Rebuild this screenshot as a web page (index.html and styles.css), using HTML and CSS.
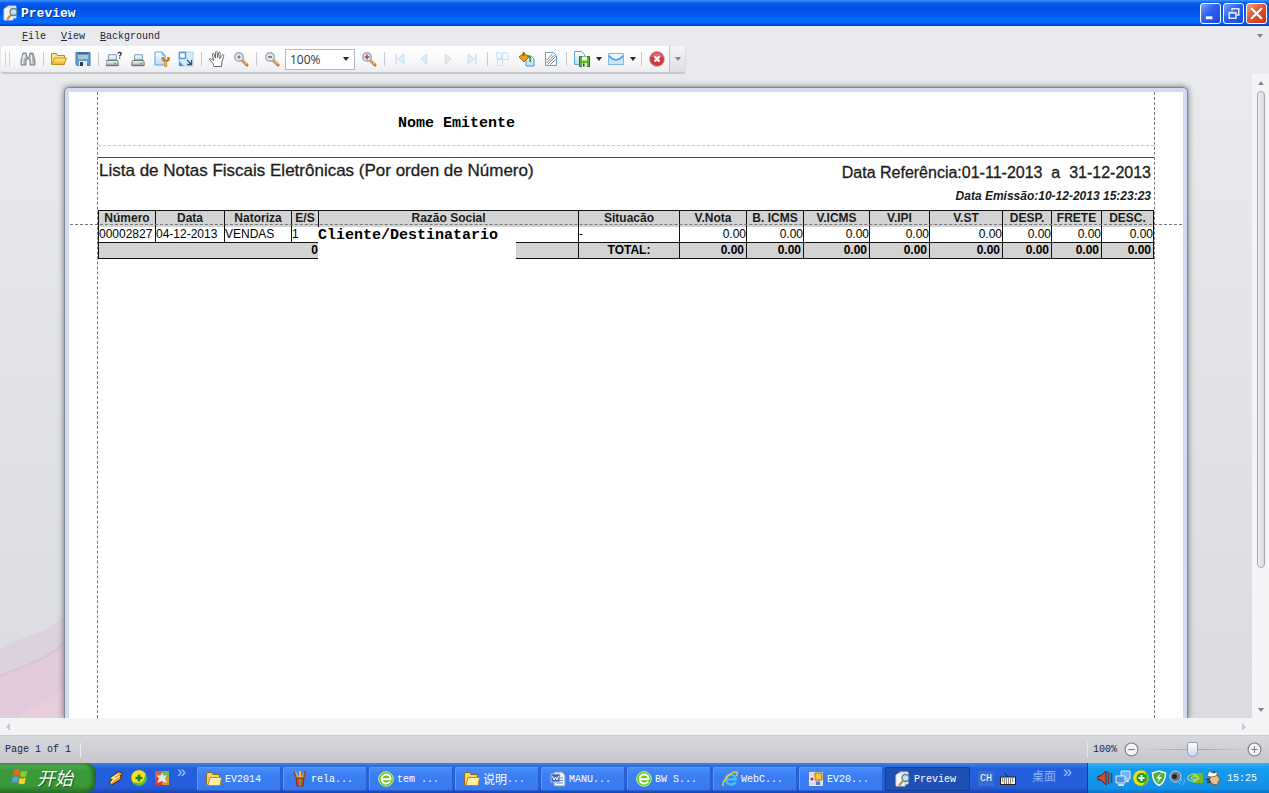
FILE: index.html
```html
<!DOCTYPE html>
<html lang="pt">
<head>
<meta charset="utf-8">
<title>Preview</title>
<link rel="stylesheet" href="styles.css">
</head>
<body>
<svg class="defs" aria-hidden="true">
  <defs>
    <linearGradient id="gold" x1="0" y1="0" x2="0" y2="1"><stop offset="0" stop-color="#fff0a0"/><stop offset="1" stop-color="#eeb01c"/></linearGradient>
    <linearGradient id="steel" x1="0" y1="0" x2="0" y2="1"><stop offset="0" stop-color="#fff"/><stop offset="1" stop-color="#a4a9ae"/></linearGradient>
    <linearGradient id="sky" x1="0" y1="0" x2="0" y2="1"><stop offset="0" stop-color="#fff"/><stop offset="1" stop-color="#b4dcf8"/></linearGradient>
    <symbol id="preview" viewBox="0 0 16 16"><path d="M5 1h8v12H5z" fill="#fff" stroke="#bcd" /><path d="M1 4l3-2h6v13H1z" fill="#f6f6f4" stroke="#ccd"/><circle cx="10.500" cy="7" r="3.500" fill="#c4e4f6" stroke="#5f7f98" stroke-width="1.400"/><path d="m8 10-4 4.500" stroke="#c28a42" stroke-width="2"/></symbol>
    <symbol id="folder" viewBox="0 0 16 16"><path d="M.5 13.500v-11h5l1 2h7v9z" fill="#ffe484" stroke="#b98a19"/><path d="M1 13.500 3.500 7h12l-2.500 6.500z" fill="url(#gold)" stroke="#c28f18"/></symbol>
    <symbol id="fold2" viewBox="0 0 16 16"><path d="M.5 13V3l1-1.500h4L7 3.500h6.500V7H15l-1 7.500H2z" fill="#f8d468" stroke="#8d6a17"/><path d="M2 14 4 6.500h11.500L14 14.500H2z" fill="#fff0a0" stroke="#b98a29"/></symbol>
    <symbol id="printer" viewBox="0 0 16 16"><path d="M4 8V2h9v6z" fill="url(#sky)" stroke="#6a8ca8"/><path d="M2 8.500h12l1 2v4H1v-4z" fill="url(#steel)" stroke="#555b62"/><path d="M2 14h12" stroke="#6c7279"/><path d="M10 11h3v1.500h-3z" fill="#64c52d"/></symbol>
    <symbol id="lens" viewBox="0 0 16 16"><path d="m9 9 5 5" stroke="#bd7126" stroke-width="3" stroke-linecap="round"/><path d="m9.500 9 4.500 4.500" stroke="#f4bd72" stroke-width="1.400"/><circle cx="6" cy="6" r="4.300" fill="#d8edfa" stroke="#9aa9b8" stroke-width="1.400"/></symbol>
    <symbol id="browser" viewBox="0 0 16 16"><circle cx="8" cy="8" r="7.300" fill="#68c81e" stroke="#c4ee94"/><path d="M3.500 8.300h9c.3-3-1.700-4.800-4.300-4.800-2.700 0-4.500 2-4.500 4.500s2 4.500 4.500 4.500c1.700 0 3-.6 4-2" fill="none" stroke="#fff" stroke-width="2"/></symbol>
  </defs>
</svg>

<div class="window">
  <header class="titlebar">
    <svg class="i16"><use href="#preview"/></svg>
    <h1 class="caption">Preview</h1>
    <button class="winbtn" aria-label="Minimize"><svg viewBox="0 0 20 20"><path d="M5 13h7v3H5z" fill="#fff"/></svg></button>
    <button class="winbtn" aria-label="Restore"><svg viewBox="0 0 20 20" fill="none" stroke="#dfe9ff"><path d="M8.500 7V5h7v6.500H13M8 5h8" stroke-width="1.700"/><path d="M5.500 9.500h7v5.500h-7zM5 9h8" stroke-width="1.700"/></svg></button>
    <button class="winbtn close" aria-label="Close"><svg viewBox="0 0 20 20"><path d="m5 5 10 10m0-10-10 10" stroke="#fff" stroke-width="2.400" stroke-linecap="round"/></svg></button>
  </header>

  <nav class="menubar">
    <button class="menu"><u>F</u>ile</button>
    <button class="menu"><u>V</u>iew</button>
    <button class="menu"><u>B</u>ackground</button>
    <svg class="caret grey menu-more" viewBox="0 0 8 4"><path d="M1 0h6L4 4z"/></svg>
  </nav>

  <div class="toolbar">
    <span class="grip"></span>
    <button class="tool" aria-label="Find"><svg viewBox="0 0 16 16"><path d="M3 2h3l1 4 1 1 1-1 1-4h3l2 8v4h-5v-4l-1-2H7l-1 2v4H1v-4z" fill="#a9b1b8" stroke="#80878e"/><path d="M3.500 4 2.500 13M11 4l1 9M4.500 3v4" stroke="#eef2f4" stroke-width="1.300"/></svg></button>
    <span class="sep"></span>
    <button class="tool" aria-label="Open"><svg><use href="#folder"/></svg></button>
    <button class="tool" aria-label="Save"><svg viewBox="0 0 16 16"><path d="M1 1.500h14v13H2l-1-1z" fill="#5b9fd8" stroke="#3f76ab"/><path d="M3 2h10v6H3z" fill="#b4c2ca"/><path d="M3 2h10v1.500H3z" fill="#37658e"/><path d="M4 10h8v5H4z" fill="#e8edf2"/><path d="M5 11h3v4H5z" fill="#333e4a"/></svg></button>
    <span class="sep"></span>
    <button class="tool" aria-label="Print"><svg viewBox="0 0 16 16"><use href="#printer" x="-1" y="2" width="14" height="14"/><path d="M12 2.500c0-1.500 3.300-1.500 3.300 0 0 1.200-1.600 1.200-1.600 2.700M13.700 6.200v1.200" fill="none" stroke="#222" stroke-width="1.200"/></svg></button>
    <button class="tool" aria-label="Quick print"><svg viewBox="0 0 16 16"><use href="#printer" x="1" y="2" width="14" height="14"/></svg></button>
    <button class="tool" aria-label="Page setup"><svg viewBox="0 0 16 16"><path d="M1 1h7l3 3v10H1z" fill="url(#sky)" stroke="#5ba4dc"/><path d="M8 1v3h3" fill="none" stroke="#5ba4dc"/><path d="M9 6v2.500l2.800 2 2.700-2V6M11.800 10v6" fill="none" stroke="#d27a18" stroke-width="2.700"/><path d="M11.800 10.500v5" stroke="#ffc04c" stroke-width="1.200"/></svg></button>
    <button class="tool" aria-label="Scale"><svg viewBox="0 0 16 16"><path d="M1 1h14v14H1z" fill="#d8edfb" stroke="#a8cfed"/><path d="M1.500 1.500h6v6h-6z" fill="#fff" stroke="#4b9ddb" stroke-width="1.400"/><path d="M1 10v5h5" fill="#3d97dc"/><path d="m9 9 4 4M13.500 9v4.500H9" fill="none" stroke="#2b5880" stroke-width="1.300"/></svg></button>
    <span class="sep"></span>
    <button class="tool" aria-label="Hand tool"><svg viewBox="0 0 16 16"><path d="M5 15.500 4 12.500.6 8.500C.2 7.500 1.700 7 2.500 8l2 1.500-1-6C3.300 2 4.800 2 5.200 3.200L6.500 7V1.500c0-1.500 1.700-1.500 1.800 0L8.500 7l1-5c.3-1.200 2-1 1.800.4l-.6 5.200 2.300-3.200c.8-1.100 2.200-.3 1.800.7L13 10.500l-.5 5z" fill="#fff" stroke="#55585c" stroke-width=".9"/></svg></button>
    <button class="tool" aria-label="Magnifier"><svg viewBox="0 0 16 16"><use href="#lens"/><path d="M4.500 6h3M6 4.500v3" stroke="#d75240" stroke-width="1.500"/></svg></button>
    <span class="sep"></span>
    <button class="tool" aria-label="Zoom out"><svg viewBox="0 0 16 16"><use href="#lens"/><path d="M4 6h4" stroke="#bd443b" stroke-width="1.500"/></svg></button>
    <span class="combo">
      <select class="zoom" aria-label="Zoom"><option>100%</option></select>
      <svg class="caret" viewBox="0 0 8 4"><path d="M1 0h6L4 4z"/></svg>
    </span>
    <button class="tool" aria-label="Zoom in"><svg viewBox="0 0 16 16"><use href="#lens"/><path d="M3.500 6h5M6 3.500v5" stroke="#c33a32" stroke-width="1.500"/></svg></button>
    <span class="sep"></span>
    <button class="tool" aria-label="First page" disabled><svg viewBox="0 0 16 16" fill="#dcecf8" stroke="#cbe1f3"><path d="M12 3v10L5.500 8z"/><path d="M4 3v10" stroke-width="1.500"/></svg></button>
    <button class="tool" aria-label="Previous page" disabled><svg viewBox="0 0 16 16" fill="#dcecf8" stroke="#cbe1f3"><path d="M10.500 3v10l-5.500-5z"/></svg></button>
    <button class="tool" aria-label="Next page" disabled><svg viewBox="0 0 16 16" fill="#dcecf8" stroke="#cbe1f3"><path d="M5.500 3v10l5.500-5z"/></svg></button>
    <button class="tool" aria-label="Last page" disabled><svg viewBox="0 0 16 16" fill="#dcecf8" stroke="#cbe1f3"><path d="M4 3v10l6.500-5z"/><path d="M12 3v10" stroke-width="1.500"/></svg></button>
    <span class="sep"></span>
    <button class="tool" aria-label="Multiple pages" disabled><svg viewBox="0 0 16 16" fill="#f3f9fd" stroke="#cbe1f2"><path d="M1.500 1.500h3l2 2v4h-5zM7.500 1.500h4l2 2v5h-6zM2.500 8.500h5v6h-5z"/></svg></button>
    <button class="tool" aria-label="Page colour"><svg viewBox="0 0 16 16"><path d="M7 5h5l3 3v7H7z" fill="url(#sky)" stroke="#4b96d4"/><path d="m0 6 5-4 5 4-5 5z" fill="#e8a31d" stroke="#a26a10"/><path d="M4.500 5V1" stroke="#8c5808" stroke-width="1.500"/><path d="M8 5c3 0 4 2 3 6" fill="none" stroke="#3a9b31" stroke-width="2"/></svg></button>
    <button class="tool" aria-label="Watermark"><svg viewBox="0 0 16 16"><path d="M2.500 1.500h8l3 3v10h-11z" fill="#fff" stroke="#5c9ed4"/><path d="m3.500 9 6-6m-6 9 8-8m-7 9.500 8-8m-5 8 5-5" stroke="#777"/></svg></button>
    <span class="sep"></span>
    <button class="tool" aria-label="Export"><svg viewBox="0 0 16 16"><path d="M.5.500h7l3 3v10H.5z" fill="url(#sky)" stroke="#5ba4dc"/><path d="M5.500 5.500h10v10h-10z" fill="#56b72d" stroke="#29780f"/><path d="M8 5.500h5v4H8z" fill="#f6fff0"/><path d="M8 12h5v4H8z" fill="#dceccf"/><path d="M9 12.500h1.500v3H9z" fill="#333"/></svg></button>
    <button class="drop" aria-label="Export options"><svg class="caret" viewBox="0 0 8 4"><path d="M1 0h6L4 4z"/></svg></button>
    <button class="tool" aria-label="Send by e-mail"><svg viewBox="0 0 16 16"><path d="M.5 2.500h15v11H.5z" fill="#c6e5fa" stroke="#7ab8e4"/><path d="M1 3h14L8 9z" fill="#eff8fe"/><path d="M1 5c4 5 10 5 14 0" fill="none" stroke="#4d98d4" stroke-width="1.300"/></svg></button>
    <button class="drop" aria-label="E-mail options"><svg class="caret" viewBox="0 0 8 4"><path d="M1 0h6L4 4z"/></svg></button>
    <span class="sep"></span>
    <button class="tool" aria-label="Close preview"><svg viewBox="0 0 16 16"><circle cx="8" cy="8" r="7.500" fill="#d4363c" stroke="#b9bec5"/><path d="M2 6a6.500 6.500 0 0 1 12 0z" fill="#e46a68"/><path d="m5.500 5.500 5 5m0-5-5 5" stroke="#fff" stroke-width="2.400"/></svg></button>
    <button class="overflow" aria-label="More buttons"><svg class="caret grey" viewBox="0 0 8 4"><path d="M1 0h6L4 4z"/></svg></button>
  </div>

  <main class="viewer">
    <div class="canvas">
      <svg class="waves" viewBox="0 0 65 102" aria-hidden="true"><path d="M0 34C22 18 44 20 65 0v102H0z" fill="#dec8dc" opacity=".5"/><path d="M0 60C22 50 44 46 65 26v76H0z" fill="#e6c4da" opacity=".5"/><path d="M0 60C22 50 44 46 65 26" fill="none" stroke="#dba9d2" opacity=".35" stroke-width="2"/><path d="M17 102C30 90 50 84 65 70v32z" fill="#ead0da" opacity=".6"/></svg>
      <article class="page">
        <div class="margins">
          <div class="band"><p class="issuer">Nome Emitente</p></div>
          <div class="heading">
            <h2 class="title">Lista de Notas Fiscais Eletrônicas (Por orden de Número)</h2>
            <div class="dates">
              <p class="period">Data Referência:01-11-2013 &nbsp;a &nbsp;31-12-2013</p>
              <p class="issued">Data Emissão:10-12-2013 15:23:23</p>
            </div>
          </div>
          <div class="grid">
            <table class="notes">
              <colgroup><col class="w57"><col class="w69"><col class="w67"><col class="w27"><col class="w260"><col class="w101"><col class="w67"><col class="w57"><col class="w66"><col class="w60"><col class="w73"><col class="w49"><col class="w50"><col class="w52"></colgroup>
              <thead><tr><th>Número</th><th>Data</th><th>Natoriza</th><th>E/S</th><th>Razão Social</th><th>Situacão</th><th>V.Nota</th><th>B. ICMS</th><th>V.ICMS</th><th>V.IPI</th><th>V.ST</th><th>DESP.</th><th>FRETE</th><th>DESC.</th></tr></thead>
              <tbody><tr><td>00002827</td><td>04-12-2013</td><td>VENDAS</td><td>1</td><td class="name"><span class="client">Cliente/Destinatario</span></td><td>-</td><td class="num">0.00</td><td class="num">0.00</td><td class="num">0.00</td><td class="num">0.00</td><td class="num">0.00</td><td class="num">0.00</td><td class="num">0.00</td><td class="num">0.00</td></tr></tbody>
              <tfoot><tr><td class="num" colspan="4">0</td><td></td><td class="total">TOTAL:</td><td class="num">0.00</td><td class="num">0.00</td><td class="num">0.00</td><td class="num">0.00</td><td class="num">0.00</td><td class="num">0.00</td><td class="num">0.00</td><td class="num">0.00</td></tr></tfoot>
            </table>
            <div class="guide"></div>
          </div>
        </div>
      </article>
    </div>
    <div class="vscroll">
      <svg class="caret grey" viewBox="0 0 8 4"><path d="M1 4h6L4 0z"/></svg>
      <div class="vtrack"><div class="vthumb"></div></div>
      <svg class="caret grey" viewBox="0 0 8 4"><path d="M1 0h6L4 4z"/></svg>
    </div>
  </main>
  <div class="hscroll">
    <svg class="side" viewBox="0 0 4 8"><path d="M4 0v8L0 4z"/></svg>
    <svg class="side" viewBox="0 0 4 8"><path d="M0 0v8l4-4z"/></svg>
  </div>

  <footer class="status">
    <span class="pages">Page 1 of 1</span>
    <span class="stsep"></span>
    <div class="zoomer">
      <label for="zoomrange">100%</label>
      <button class="round" aria-label="Decrease zoom"><svg viewBox="0 0 14 14"><circle cx="7" cy="7" r="6"/><path d="M4 7h6"/></svg></button>
      <input class="range" id="zoomrange" type="range" min="0" max="100" value="48">
      <button class="round" aria-label="Increase zoom"><svg viewBox="0 0 14 14"><circle cx="7" cy="7" r="6"/><path d="M4 7h6M7 4v6"/></svg></button>
    </div>
  </footer>

  <div class="taskbar">
    <button class="start"><svg viewBox="0 0 18 18"><path d="M3 3c2-2 4-1 5.500 0L7.500 8.500c-2-1-4-1-5.700.3z" fill="#f0642c"/><path d="M9.500 3.500c2 1 4 1 6-.3l-1.200 5.500c-2 1.300-4 1-5.800 0z" fill="#8dcb2c"/><path d="M1.600 10c2-1.500 4-1.300 5.600-.3L6 15c-2-1-3.500-1-5.500.4z" fill="#5a9cf4"/><path d="M8.200 10.200c2 1 4 1 5.800-.2L13 15.300c-2 1.300-4 1.200-6 .2z" fill="#fbd02c"/></svg>开始</button>
    <div class="quick">
      <button class="qbtn" aria-label="Winamp"><svg viewBox="0 0 16 16"><path d="M11 1.500 3 7l-.5 2.500 2 .5L1 12.500 3.500 15 12 10l1.500-3-2-.5 3.500-3z" fill="#f4981c" stroke="#3c2c18"/><path d="M10.500 3.500 4 8l3 .5-4 4M7 9l5-3" fill="none" stroke="#ffe8b0" stroke-width="1.400"/></svg></button>
      <button class="qbtn" aria-label="Security"><svg viewBox="0 0 16 16"><circle cx="8" cy="8" r="7.800" fill="#5cc03c"/><path d="M.5 8a7.500 7.500 0 0 1 14-4C13 12 9 13 2 12.500A8 8 0 0 1 .5 8" fill="#f6e21c"/><circle cx="8" cy="8" r="5" fill="#f8e020"/><path d="M8 4.500v7M4.500 8h7" stroke="#14862c" stroke-width="2.400"/></svg></button>
      <button class="qbtn" aria-label="Photos"><svg viewBox="0 0 16 16"><path d="M1 1h7v7H1z" fill="#d8603c"/><path d="M8 1h7v7H8z" fill="#6fb85a"/><path d="M1 8h7v7H1z" fill="#e03c28"/><path d="M8 8h7v7H8z" fill="#e0952e"/><path d="m8 2.500 1.500 3H13l-2 3 2 4.500-5-2-5 2 2-4.500-2-3h3.500z" fill="#d9ecf0"/></svg></button>
      <span class="more">»</span>
    </div>
    <div class="tasks">
      <button class="task"><svg><use href="#fold2"/></svg>EV2014</button>
      <button class="task"><svg viewBox="0 0 16 16"><path d="m3 1 4 8M8 0v9m5-8-4 8" stroke="#ecc14c" stroke-width="2"/><path d="m2 1 2 5m9-6-1 6" stroke="#8d4a2c" stroke-width="2"/><path d="M4 7h8l-1 8H5z" fill="#d8452c" stroke="#8c2412"/><path d="M8 8v7" stroke="#58a83a" stroke-width="2"/></svg>rela...</button>
      <button class="task"><svg><use href="#browser"/></svg>tem ...</button>
      <button class="task"><svg><use href="#fold2"/></svg><span class="cjk">说明</span>...</button>
      <button class="task"><svg viewBox="0 0 16 16"><path d="M4 1h8l3 3v11H4z" fill="#f4f7fd" stroke="#8293b4"/><path d="M6 12h7M10 7h3M10 9.500h3" stroke="#7086b4"/><path d="M1 3h9v8H1z" fill="#4162b4" stroke="#b4c4ec"/><path d="m2.500 5 1.500 4 1.500-3L7 9l1.500-4" fill="none" stroke="#fff"/></svg>MANU...</button>
      <button class="task"><svg><use href="#browser"/></svg>BW S...</button>
      <button class="task"><svg viewBox="0 0 16 16"><path d="M4 8.500h9.500C13.500 5 11.500 3.500 9 3.500c-3 0-5 2-5 5s2 5 5 5c2 0 3.500-.8 4.500-2.500" fill="none" stroke="#48bef4" stroke-width="2.600"/><path d="M1.500 15C-1 12 8 0 14.500 1c1.500.6.5 3 0 4" fill="none" stroke="#f2c838" stroke-width="1.500"/></svg>WebC...</button>
      <button class="task"><svg viewBox="0 0 16 16"><path d="M1.500 1.500h13v13h-13z" fill="#d7dbe5" stroke="#eee"/><path d="M7 2h7v7H7z" fill="#f4c63c" stroke="#a87410"/><path d="M2 6h4v4H2z" fill="#c9302c" stroke="#fff"/><path d="M8 10.500h4V14H8z" fill="#4c7cd4"/></svg>EV20...</button>
      <button class="task active"><svg><use href="#preview"/></svg>Preview</button>
    </div>
    <div class="lang">
      <span class="ch">CH</span>
      <svg class="i16" viewBox="0 0 16 16"><path d="M.5 7h15v7.500H.5z" fill="#f4f0dc" stroke="#222"/><path d="M2 9h12M2 11h12M4 13h8" stroke="#222" stroke-dasharray="1 1"/><path d="M8 7c0-2-3-1-3-4" fill="none" stroke="#222"/></svg>
      <span class="desk">桌面</span><span class="more">»</span>
    </div>
    <div class="tray">
      <svg viewBox="0 0 16 16"><path d="M1 6h3l5-5v14l-5-5H1z" fill="#c85432" stroke="#5c1c0c"/><path d="M11.500 2v12M14.500 3v10" stroke="#6b3a34" stroke-width="1.500"/></svg>
      <svg viewBox="0 0 16 16"><path d="M6 1h9v8H6z" fill="#6cb5f4" stroke="#dbe8f6"/><path d="M1 6h9v7H1z" fill="#4c94e6" stroke="#e6eef8"/><path d="M3 15h6m2-4h3" stroke="#d6dfe8" stroke-width="2"/></svg>
      <svg viewBox="0 0 16 16"><circle cx="8" cy="8" r="7.800" fill="#f4e000"/><path d="M12 1.200A7.800 7.800 0 0 1 9 15.700C13 12 13 6 12 1.200" fill="#5cc03c"/><circle cx="8.500" cy="8" r="5" fill="#189b28"/><path d="M8.500 5v6M5.500 8h6" stroke="#fff" stroke-width="2"/></svg>
      <svg viewBox="0 0 16 16"><path d="m8 1 6.500 2c0 6-1.500 10-6.500 12.500C3 13 1.500 9 1.500 3z" fill="#4fb13c" stroke="#f0fbe8" stroke-width="1.500"/><path d="m10 3-5 5.500h3L6 13l5-6H8z" fill="#fff"/></svg>
      <svg viewBox="0 0 16 16"><circle cx="6.500" cy="6.500" r="5.500" fill="#6f7a84" stroke="#d2dae2"/><circle cx="5.500" cy="6.500" r="2.500" fill="#1e242a"/><path d="M12 9c1 2 0 3-2 5m5-5c1 2 0 4-2 6" fill="none" stroke="#8cb4f4"/></svg>
      <svg viewBox="0 0 16 16"><path d="M6 3h10v10H6z" fill="#75b82a"/><path d="M0 8c4-5.500 9-5 12 0-4 5-9 4-12 0zm4 0c2-3 5-3 7 0-3 3-5 2-7 0z" fill="none" stroke="#a4dc5c" stroke-width="1.300"/></svg>
      <svg viewBox="0 0 16 16"><path d="m6 6 5-2 4 5-3 6-5-1-3-4z" fill="#e9c08c" stroke="#8b5626"/><path d="m4 1 4 2 5-1-2 4-5 1-4-1z" fill="#fff" stroke="#59534b" stroke-width=".7"/><path d="M1 9.500h4M2 12.500l4-1M9 3V1" stroke="#39332b" stroke-width="1.400"/></svg>
      <time>15:25</time>
    </div>
  </div>
</div>
</body>
</html>
```
FILE: styles.css
```css
* { box-sizing: border-box; }
body { margin: 0; font-family: "Liberation Sans", Arial, sans-serif; font-size: 12px; color: #000; }
button { border: 0; padding: 0; background: none; color: inherit; font: inherit; }
h1, h2, p { margin: 0; }
svg { display: block; flex: none; }
.defs { position: absolute; width: 0; height: 0; }
.i16 { width: 16px; height: 16px; }
.window { display: flex; flex-direction: column; height: 100vh; background: #e9eaee; overflow: hidden; }

.titlebar { display: flex; align-items: center; gap: 2px; flex: none; height: 26px; padding: 0 2px 0 3px; background: linear-gradient(#3c96ff 0, #0a5cee 3px, #0050e0 8px, #0058f0 14px, #0068ff 18px, #0066fc 23px, #0038c0 26px); }
.caption { flex: 1; font: bold 13px "Liberation Mono", "Courier New", monospace; color: #fff; text-shadow: 1px 1px 0 #0a2f88; }
.winbtn { width: 21px; height: 21px; border: 1px solid #fff; border-radius: 3px; background: linear-gradient(135deg, #7aa4fa, #2c5ff0 45%, #1a49d8); }
.winbtn svg { width: 19px; height: 19px; }
.winbtn.close { background: linear-gradient(135deg, #f4a288, #e4542c 45%, #cc3408); }

.menubar { display: flex; align-items: center; gap: 15px; flex: none; height: 20px; padding: 0 5px 0 22px; font: 10px "Liberation Mono", "Courier New", monospace; color: #25253b; }
.menu-more { margin-left: auto; }
.caret { width: 8px; height: 4px; fill: #23233a; }
.caret.grey { fill: #85858f; }

.toolbar { display: flex; align-items: center; align-self: flex-start; flex: none; height: 28px; margin-left: 1px; border: 1px solid #dcdde2; border-width: 0 1px 2px 0; border-bottom-color: #c6c8ce; border-radius: 3px; background: linear-gradient(#fff, #f8f8fa 60%, #ececf0); }
.grip { width: 5px; height: 16px; margin: 0 6px 0 4px; border: 1px solid #d2d3d8; border-width: 0 1px; }
.tool { display: flex; align-items: center; justify-content: center; width: 24px; height: 24px; }
.tool svg { width: 16px; height: 16px; }
.sep { width: 1px; height: 14px; margin: 0 3px; background: #c9cad0; }
.combo { display: flex; position: relative; margin: 0 2px 0 1px; }
.zoom { appearance: none; width: 70px; height: 21px; padding: 0 4px; border: 1px solid #b4b6c0; border-radius: 0; background: #fff; color: #33334a; font: 12px "Open Sans", Verdana, sans-serif; }
.combo .caret { position: absolute; right: 5px; top: 8px; }
.drop { width: 10px; height: 24px; }
.drop .caret { margin-left: 1px; }
.overflow { display: flex; align-items: center; justify-content: center; width: 16px; height: 26px; border-left: 1px solid #c6c7cd; background: linear-gradient(#f6f6f8, #dddee3); }

.viewer { display: flex; flex: 1; min-height: 0; background: linear-gradient(#e9eaee, #d9dbe0); }
.canvas { display: flex; flex: 1; position: relative; padding: 14px 65px 0; overflow: hidden; }
.waves { position: absolute; left: 0; bottom: 0; width: 65px; height: 102px; }
.page { flex: 1; position: relative; padding: 0 28px; border: 4px solid #d3dbf4; border-bottom: 0; border-radius: 4px 4px 0 0; outline: 1px solid #85878c; box-shadow: 0 0 6px 1px #6a6c72; background: #fff; }
.margins { height: 100%; border: 1px dashed #777; border-width: 0 1px; }
.band { height: 54px; border-bottom: 1px dashed #c6c6c6; }
.issuer { padding: 23px 0 0 300px; font: bold 15px/18px "Liberation Mono", "Courier New", monospace; }
.heading { display: flex; justify-content: space-between; height: 53px; margin-top: 11px; border-top: 1px solid #4a4a4a; color: #1c1c1c; }
.title { padding: 4px 0 0 1px; font: 17px/18px "Liberation Sans", Arial, sans-serif; -webkit-text-stroke: 0.3px #1c1c1c; }
.dates { padding: 6px 3px 0 0; text-align: right; }
.period { font-size: 16px; line-height: 18px; -webkit-text-stroke: 0.3px #1c1c1c; }
.issued { padding-top: 6px; font: italic bold 12px/16px "Liberation Sans", Arial, sans-serif; }

.grid { position: relative; }
.notes { width: 100%; table-layout: fixed; border-collapse: collapse; line-height: 15px; }
.notes th, .notes td { height: 16px; padding: 0; border: 1px solid #111; white-space: nowrap; text-align: left; }
.notes thead th { border-bottom: 0; background: #d3d3d3; text-align: center; line-height: 15px; color: #1c1c1c; }
.notes tbody td { border-top: 0; }
.notes tfoot td { background: #d3d3d3; font-weight: bold; }
.notes .num { text-align: right; }
.notes tfoot .num { padding-right: 2px; }
.notes tfoot .num:first-child { padding-right: 0; }
.notes .total { text-align: center; }
.name { position: relative; }
.client { position: absolute; left: -1px; top: 0; width: 198px; height: 35px; background: #fff; font: bold 15px/18px "Liberation Mono", "Courier New", monospace; }
.w57 { width: 57px; } .w69 { width: 69px; } .w67 { width: 67px; } .w27 { width: 27px; }
.w260 { width: 260px; } .w101 { width: 101px; } .w66 { width: 66px; } .w60 { width: 60px; }
.w73 { width: 73px; } .w49 { width: 49px; } .w50 { width: 50px; } .w52 { width: 52px; }
.guide { position: absolute; left: -28px; right: -28px; top: 14px; border-top: 1px dashed #777; }

.vscroll { display: flex; flex-direction: column; align-items: center; width: 17px; padding: 7px 0 6px; background: #f4f4f6; }
.vtrack { flex: 1; padding: 6px 0; }
.vthumb { width: 8px; height: 78%; border: 1px solid #a5a7b0; border-radius: 4px; background: linear-gradient(90deg, #f0f0f3, #d8d9df); }
.hscroll { display: flex; align-items: center; justify-content: space-between; flex: none; height: 17px; padding: 0 23px 0 6px; background: #f4f4f6; }
.side { width: 4px; height: 8px; fill: #c6c7cc; }

.status { display: flex; align-items: center; flex: none; height: 28px; padding: 0 7px 0 5px; border-top: 1px solid #c6c8cd; background: linear-gradient(#d8d9de, #c6c7cb); font: 10px "Liberation Mono", "Courier New", monospace; color: #23233a; }
.stsep { width: 1px; height: 14px; margin-left: 9px; background: #eeeef1; }
.zoomer { display: flex; align-items: center; margin-left: auto; padding-left: 5px; border-left: 1px solid #e6e6ea; }
.round { margin-left: 7px; width: 15px; height: 15px; }
.round svg { width: 15px; height: 15px; fill: #f4f4f6; stroke: #777a82; }
.range { appearance: none; width: 105px; height: 16px; margin: 0 0 0 3px; background: linear-gradient(90deg, transparent, #b9a3cb 30%, #aaa0b8 60%, transparent) center / 100% 1px no-repeat; }
.range::-webkit-slider-thumb { appearance: none; width: 11px; height: 15px; border: 1px solid #8f9ab4; border-radius: 2px 2px 6px 6px; background: linear-gradient(#fff, #ccd9f6); }
.range + .round { margin-left: 0; }

.taskbar { display: flex; align-items: stretch; flex: none; height: 30px; background: linear-gradient(#3a86ea 0, #2560dc 5px, #245edc 24px, #1c44b0); color: #fff; font: 10px "Liberation Mono", "Noto Sans CJK SC", monospace; }
.start { display: flex; align-items: center; gap: 7px; width: 96px; padding: 0 0 3px 11px; border-radius: 0 10px 10px 0; background: linear-gradient(#5fac5c, #3c9a3c 25%, #379a37 75%, #2b742b); box-shadow: inset -3px 0 4px #226322; font: italic 18px/20px "Noto Sans CJK SC", sans-serif; text-shadow: 1px 1px 1px #1d4d1d; }
.start svg { width: 19px; height: 19px; }
.quick { display: flex; align-items: center; gap: 7px; width: 101px; padding-left: 12px; }
.qbtn svg { width: 16px; height: 16px; }
.more { align-self: flex-start; font: 16px/18px "Liberation Sans", Arial, sans-serif; color: #a8c8f8; }
.tasks { display: flex; flex: 1; gap: 2px; padding: 4px 0 2px; }
.task { display: flex; align-items: center; flex: 1 1 0; gap: 3px; padding-left: 8px; border: 1px solid #4d90fa; border-color: #5a9afc #2a60d0 #2a60d0 #5a9afc; border-radius: 2px; background: linear-gradient(#4a8cfa, #3c7ff4 30%, #377af0); white-space: nowrap; }
.task svg { width: 16px; height: 16px; }
.task.active { padding-left: 9px; border-color: #163e90; background: #1e50b4; }
.cjk { margin-right: -3px; font: 12px/14px "Noto Sans CJK SC", sans-serif; }
.lang { display: flex; align-items: center; width: 117px; padding-left: 8px; }
.ch { padding: 2px; background: #3a6cc8; }
.lang .i16 { margin: 0 16px 0 6px; }
.desk { margin-right: 7px; font-size: 12px; line-height: 14px; color: #86b4f4; }
.tray { display: flex; align-items: center; gap: 2px; flex: none; width: 182px; padding: 0 0 0 9px; border-left: 1px solid #0c3c9c; background: linear-gradient(#34b0f8, #129cee 20%, #1290e8 85%, #0c70c4); }
.tray svg { width: 16px; height: 16px; }
.tray time { margin-left: 4px; }
```
